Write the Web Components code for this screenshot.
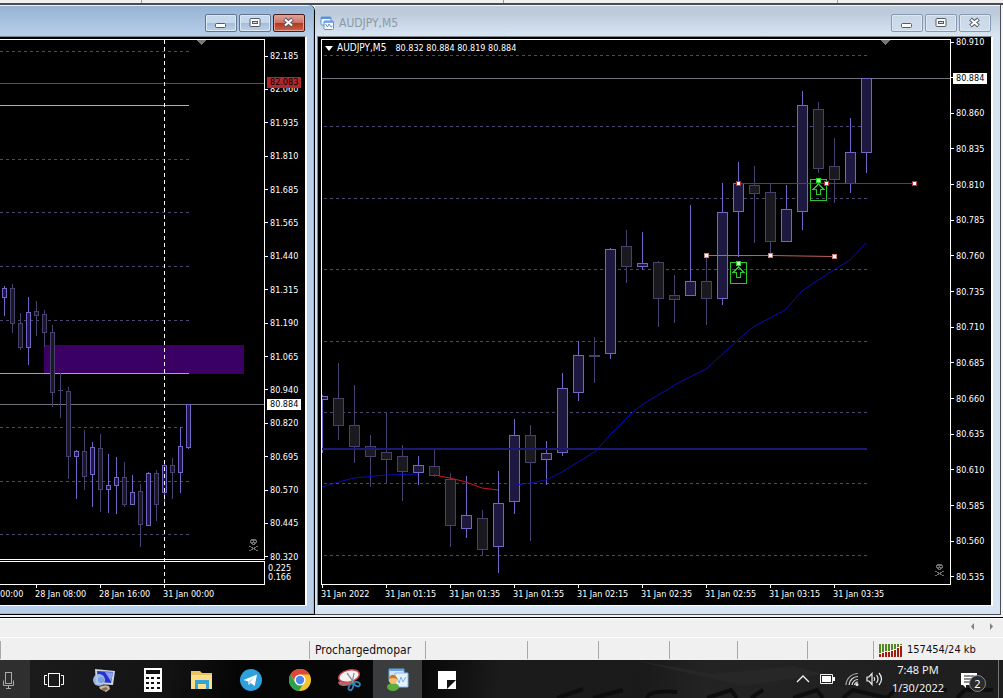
<!DOCTYPE html>
<html lang="en">
<head>
<meta charset="utf-8">
<title>AUDJPY,M5</title>
<style>
html, body { margin: 0; height: 100%; }
body { overflow: hidden; background: #f0f0f0; font-family: "DejaVu Sans Condensed", "DejaVu Sans", sans-serif; }
</style>
</head>
<body>
<trade-desktop></trade-desktop>
<script>
function define(name, html, setup) {
  const template = document.createElement('template');
  template.innerHTML = html;
  customElements.define(name, class extends HTMLElement {
    connectedCallback() {
      if (this.shadowRoot) return;
      const root = this.attachShadow({ mode: 'open' });
      root.append(template.content.cloneNode(true));
      if (setup) setup(this, root);
    }
  });
}

/* Candles: [x, rising, high, bodyTop, bodyBottom, low] */
const SERIES = {
  h1: {
    box: [0, 39, 265, 546], half: 2, gridFrom: 0, gridTo: 189, grid: [51, 159, 212, 266, 320, 427, 481, 534],
    candles: [
      [4,1,286,288,297,315],[12,0,284,288,323,332],[20,0,313,323,347,349],[28,1,297,312,347,364],
      [36,0,301,311,315,335],[44,0,310,314,332,346],[52,0,325,332,392,406],[60,0,373,390,390,417],
      [68,0,387,391,456,478],[76,1,450,451,456,498],[84,0,430,451,476,489],[92,1,442,447,474,506],
      [100,0,434,448,489,511],[108,1,454,485,489,512],[116,1,457,477,485,513],[124,0,462,477,504,506],
      [132,1,475,492,504,504],[140,0,484,491,524,546],[148,1,472,473,525,525],[156,0,470,473,504,520],
      [164,1,460,465,492,503],[172,0,458,465,472,498],[180,1,427,446,472,492],[188,1,404,404,447,448]
    ]
  },
  m5: {
    box: [321, 39, 630, 546], half: 5, gridFrom: 324, gridTo: 868, grid: [55, 126, 198, 269, 341, 412, 483, 555],
    candles: [
      [322,1,395,396,399,452],[338,0,363,398,425,439],[354,0,385,425,446,462],[370,0,435,446,456,486],
      [386,0,412,452,459,483],[402,0,445,456,471,500],[418,1,456,465,472,484],[434,0,449,466,475,476],
      [450,0,473,479,525,546],[466,1,476,515,528,537],[482,0,510,518,549,555],[498,1,471,503,546,572],
      [514,1,419,435,501,513],[530,0,425,435,462,540],[546,1,441,453,459,484],[562,1,373,388,452,455],
      [578,1,341,355,392,400],[594,0,337,355,356,382],[610,1,248,249,353,358],[626,0,230,246,266,282],
      [642,1,232,263,266,269],[658,0,261,262,298,326],[674,0,275,295,299,322],[690,1,205,281,295,295],
      [706,0,257,281,298,324],[722,1,183,212,298,304],[738,1,162,183,211,256],[754,0,166,185,193,242],
      [770,0,184,192,241,257],[786,1,185,209,241,241],[802,1,91,105,211,229],[818,0,102,109,168,172],
      [834,0,138,166,179,202],[850,1,118,152,183,192],[866,1,78,78,152,172]
    ]
  }
};

const SKULL = ['..XXXXX..', '.XXXXXXX.', '.X..X..X.', '.XXXXXXX.', '..XX.XX..', '...XXX...', '.........',
  'XX.....XX', '..XX.XX..', '...XXX...', '..XX.XX..', 'XX.....XX'];

const rect = (x, y, w, h, fill) => `<rect x="${x}" y="${y}" width="${w}" height="${h}" fill="${fill}"/>`;
const level = (x, y, to, color) => `<path d="M${x} ${y + .5}H${to}" stroke="${color}" shape-rendering="auto"/>`;
const dashes = (s) => s.grid.map(y =>
  `<path d="M${s.gridFrom} ${y + .5}H${s.gridTo}" stroke="#4a4770" stroke-dasharray="3 3"/>`).join('');
const candles = (s) => s.candles.map(([x, up, hi, top, bot, lo]) => {
  const line = up ? '#7466c8' : '#48406f', fill = up ? '#1d1940' : '#19191f', w = s.half * 2 + 1;
  let out = rect(x, hi, 1, lo - hi + 1, line);
  out += rect(x - s.half, top, w, bot - top + 1, line);
  if (bot - top > 1) out += rect(x - s.half + 1, top + 1, w - 2, bot - top - 1, fill);
  return out;
}).join('');
const skull = (x, y) => SKULL.map((row, j) => [...row].map((c, i) => c === 'X' ? rect(x + i, y + j, 1, 1, '#6c6c6c') : '').join('')).join('');
const handle = (x, y, c) => rect(x - 2, y - 2, 5, 5, c) + rect(x - 1, y - 1, 3, 3, '#fff');
const signal = (x, y) => `<rect x="${x - 7.5}" y="${y + .5}" width="16" height="21" fill="none" stroke="#28c828"/>
  <path d="M${x + .5} ${y + 5}l-5 5h3v5.500h4v-5.500h3z" fill="none" stroke="#28c828"/>` + rect(x - 2, y - 1, 5, 5, '#20e020') + rect(x - 1, y, 3, 3, '#b8ffb8');

const PAINT = {
  h1: s => dashes(s)
    + level(0, 404, 264, '#707078')
    + rect(44, 345, 200, 29, '#3a0064')
    + level(0, 83, 264, '#b8242c') + level(0, 105, 189, '#dca850') + level(0, 373, 189, '#dc9858')
    + candles(s)
    + `<path d="M164.5 40V584" stroke="#fff" stroke-dasharray="4 3"/>`
    + `<path d="M196 40h10l-5 5z" fill="#777"/>`
    + rect(0, 39, 265, 1, '#fff') + rect(264, 39, 1, 521, '#fff') + rect(0, 559, 265, 1, '#fff')
    + rect(0, 561, 265, 1, '#fff') + rect(264, 561, 1, 24, '#fff') + rect(0, 584, 265, 1, '#fff')
    + skull(249, 539),
  m5: s => dashes(s)
    + level(322, 78, 950, '#707078')
    + candles(s)
    + rect(322, 448, 545, 2, '#1b1b72')
    + `<g fill="none" shape-rendering="auto"><path stroke="#0c0cb4" d="M322 487L335 483L354 478L386 475L418 474M510 486L530 483L546 480L562 472L596 451L610 435L633 412L643 404L660 394L680 382L706 369L737 341L753 327L785 310L802 291L832 271L850 260L866 243"/>
       <path stroke="#d01820" d="M434 475L450 478L466 482L482 488L498 490"/>
       <path stroke="#c0605c" d="M706 255.500H770L834 256.500"/></g>`
    + level(738, 183, 914, '#b01c26')
    + signal(738, 262) + signal(818, 179)
    + handle(706, 255, '#d08078') + handle(770, 255, '#d08078') + handle(834, 256, '#d08078')
    + handle(738, 183, '#c03038') + handle(826, 183, '#c03038') + handle(914, 183, '#c03038')
    + `<path d="M880 40h10l-5 5z" fill="#777"/>`
    + rect(321, 39, 630, 1, '#fff') + rect(321, 39, 1, 546, '#fff') + rect(950, 39, 1, 546, '#fff') + rect(321, 584, 630, 1, '#fff')
    + skull(935, 564)
};

define('candle-plot', `
<style>
:host { display: block; min-width: 0; min-height: 0; }
svg { display: block; width: 100%; height: 100%; }
</style>`, (host, root) => {
  const s = SERIES[host.getAttribute('series')];
  root.innerHTML += `<svg viewBox="${s.box.join(' ')}" preserveAspectRatio="none" shape-rendering="crispEdges" aria-hidden="true">${PAINT[host.getAttribute('series')](s)}</svg>`;
});

define('price-scale', `
<style>
:host { display: flex; flex-direction: column; justify-content: space-between; color: #fff; font-size: 9px; line-height: 10px; }
span { display: flex; align-items: center; gap: 2px; height: 10px; }
span::before { content: ""; width: 3px; height: 1px; background: #fff; }
</style>`, (host, root) => {
  for (const value of host.getAttribute('values').split(' ')) {
    const label = document.createElement('span');
    label.textContent = value === '-' ? '' : value;
    root.append(label);
  }
});

define('time-scale', `
<style>
:host { display: flex; color: #fff; font-size: 9px; line-height: 10px; overflow: hidden; }
span { flex: 0 0 64px; white-space: nowrap; box-sizing: border-box; }
span::before { content: ""; display: block; width: 1px; height: 3px; margin: 0 0 1px 1px; background: #fff; }
span[data-cut] { flex-basis: 35px; }
span[data-cut]::before { background: none; }
</style>`, (host, root) => {
  for (const value of host.getAttribute('values').split('|')) {
    const label = document.createElement('span');
    label.textContent = value;
    if (!value.includes(' ')) label.dataset.cut = '';
    root.append(label);
  }
});

define('price-tag', `
<style>
:host { position: absolute; left: 2px; width: 34px; height: 11px; box-sizing: border-box; padding-left: 3px; font-size: 9px; line-height: 11px; color: #000; background: #fff; }
:host([tone="sell"]) { background: #b0282e; }
</style><slot></slot>`);

define('chart-panel', `
<style>
:host { flex: 1; min-height: 0; display: grid; grid-template: minmax(0, 1fr) 20px / minmax(0, 1fr) 40px; background: #000; }
.plot { position: relative; padding-top: 2px; min-height: 0; display: grid; }
.scale { position: relative; display: flex; flex-direction: column; min-height: 0; }
time-scale, ::slotted(time-scale) { grid-column: 1 / 3; }
</style>
<div class="plot"><slot name="plot"></slot></div>
<div class="scale"><slot name="scale"></slot></div>
<slot name="time"></slot>`);

define('chart-caption', `
<style>
:host { position: absolute; left: 4px; top: 3px; display: flex; align-items: center; color: #fff; font-size: 9px; line-height: 12px; white-space: nowrap; }
svg { width: 8px; height: 5px; margin-right: 4px; }
b { font-weight: normal; font-size: 10px; margin-right: 9px; }
</style>
<svg viewBox="0 0 8 5"><path d="M0 0h8L4 5z" fill="#fff"/></svg><b>AUDJPY,M5</b><span>80.832 80.884 80.819 80.884</span>`);

define('mdi-window', `
<style>
:host { display: flex; flex-direction: column; min-width: 0; box-sizing: border-box; position: relative;
  background: #d7e4f2; border: solid #4a4e55; border-width: 0 1px 1px 0; padding: 0 7px 8px 2px; }
:host([active]) { background: #b9cee8; border-color: #000; padding: 0 7px 8px 0; border-top-right-radius: 6px;
  box-shadow: inset -1px -1px #5fd0ec; }
header { height: 31px; display: flex; align-items: center; box-sizing: border-box; margin: 0 -7px 0 -2px; padding: 4px 9px 0 5px; gap: 2px;
  background: linear-gradient(#f4f8fc 0 1px, #bccadb 1px, #bccadb 8px, #d6e3f1 29px); }
:host([active]) header { margin: 0 -7px 0 0; padding-right: 9px; border-top-right-radius: 6px;
  background: linear-gradient(#e6f2fc 0 1px, #96b3d4 1px, #b5cde8 29px); box-shadow: inset -1px 0 #5fd0ec; }
.icon { width: 14px; height: 14px; margin-right: 3px; }
h1 { margin: 0; font-size: 12px; font-weight: normal; line-height: 16px; color: #8e98a4; }
:host([active]) .icon, :host([active]) h1 { display: none; }
.space { flex: 1; }
button { width: 32px; height: 18px; box-sizing: border-box; padding: 0; border: 1px solid #8798b0; border-radius: 2px; display: grid; place-items: center;
  background: linear-gradient(#c9d6e5, #d0deec); box-shadow: inset 0 0 0 1px #dce8f4; }
:host([active]) button { border-color: #5f7590; background: linear-gradient(#c6d8ec 50%, #a4bdd8 50%, #bdd2ea); }
:host([active]) .close { border-color: #4a1a18; background: linear-gradient(#e0a498 0, #cf7466 48%, #b3351f 50%, #cc6648); box-shadow: inset 0 0 0 1px #e0a098; }
button svg { width: 16px; height: 12px; display: block; }
.body { flex: 1; display: flex; min-width: 0; min-height: 0; border: solid #fff; border-width: 1px 2px 1px 1px; border-top-color: #808790; border-left-color: #808080; }
:host([active]) .body { border-left: 0; }
</style>
<header>
  <svg class="icon" viewBox="0 0 14 14"><rect x="1" y="1" width="10" height="8" rx="1" fill="#f4f8ff" stroke="#5b92dc"/><path d="M1 2h10" stroke="#5b92dc" stroke-width="2"/><rect x="4" y="5" width="9.500" height="8.500" rx="1" fill="#fff" stroke="#5b92dc"/><path d="M4 6h9" stroke="#5b92dc" stroke-width="1.500"/><path d="M5.500 8l2 3 1.500-3 2 3 1.500-1" fill="none" stroke="#5b92dc"/></svg>
  <h1><slot name="title"></slot></h1><span class="space"></span>
  <button aria-label="Minimize"><svg viewBox="0 0 16 12"><rect x="2.500" y="6.500" width="10" height="4" rx="1" fill="#fff" stroke="#555b66"/></svg></button>
  <button aria-label="Restore"><svg viewBox="0 0 16 12"><rect x="3" y="1.500" width="10" height="8" rx="1" fill="#fff" stroke="#555b66"/><rect x="5.500" y="4.500" width="5" height="2" fill="#d0dcea" stroke="#555b66"/></svg></button>
  <button class="close" aria-label="Close"><svg viewBox="0 0 16 12"><path d="M3.500 2l8 7M11.500 2l-8 7" stroke="#555b66" stroke-width="4"/><path d="M4 2.500l7 6M11 2.500l-7 6" stroke="#fff" stroke-width="2"/></svg></button>
</header>
<div class="body"><slot></slot></div>`);

define('tab-strip', `
<style>
:host { display: flex; justify-content: flex-end; align-items: flex-start; gap: 13px; height: 20px; box-sizing: border-box; border-top: 1px solid #000; padding: 5px 8px 0 0; background: #f0f0f0; box-shadow: inset 0 1px #fff; }
button { border: 0; padding: 0; width: 6px; height: 7px; background: none; display: block; }
svg { display: block; width: 6px; height: 7px; }
</style>
<button aria-label="Scroll tabs left"><svg viewBox="0 0 6 7"><path d="M4 0v7L1 3.500z" fill="#808080"/></svg></button>
<button aria-label="Scroll tabs right"><svg viewBox="0 0 6 7"><path d="M1 0v7l3-3.500z" fill="#808080"/></svg></button>`);

define('status-bar', `
<style>
:host { display: grid; grid-template-columns: 309fr 116fr 102fr 71fr 71fr 68fr 70fr 66fr 130fr; height: 23px; box-sizing: border-box; border-top: 1px solid #fff; padding: 3px 0 1px; background: #f0f0f0; color: #111; font-size: 12px; line-height: 18px; }
span { border-left: 1px solid #a8a8a8; padding-left: 5px; white-space: nowrap; display: flex; align-items: center; }
span:first-child { border: 0; }
.net { gap: 4px; font-size: 11px; }
svg { width: 24px; height: 13px; }
</style>
<span></span><span>Prochargedmopar</span><span></span><span></span><span></span><span></span><span></span><span></span>
<span class="net"><svg viewBox="0 0 24 13" shape-rendering="crispEdges"></svg>157454/24 kb</span>`, (host, root) => {
  const green = [9, 8, 7, 7, 6, 5, 3, 1];
  root.querySelector('svg').innerHTML = green.map((g, i) => rect(i * 3, 0, 2, g, '#4f8a22') + rect(i * 3, g + 1, 2, 12 - g, '#a01c10')).join('');
});

define('task-button', `
<style>
:host { display: block; flex: 0 0 49px; }
:host([mic]) { flex-basis: 30px; }
button { display: flex; align-items: center; justify-content: center; width: 100%; height: 100%; padding: 2px 0 0; border: 0; background: none; }
:host([mic]) button { background: #2f2f2f; justify-content: flex-start; }
:host([running]) button { background: #3b3c3d; }
::slotted(svg) { width: 24px; height: 24px; display: block; }
:host([mic]) ::slotted(svg) { margin-left: -4px; }
</style><button><slot></slot></button>`, (host, root) => {
  root.querySelector('button').setAttribute('aria-label', host.getAttribute('label'));
});

define('system-tray', `
<style>
:host { display: flex; align-items: center; color: #f2f2f2; font: 11px/18px "Noto Sans", sans-serif; }
button { border: 0; padding: 0; background: none; display: block; }
svg { display: block; }
.bat { margin-left: 10px; } .wifi { margin-left: 10px; } .vol { margin-left: 7px; }
time { width: 54px; margin-left: 8px; text-align: center; }
time span { display: block; white-space: nowrap; }
.notes { margin-left: 16px; position: relative; width: 30px; height: 30px; }
.notes svg { margin-top: 2px; }
.notes b { position: absolute; left: 8px; top: 11px; width: 15px; height: 15px; border: 1px solid #8a8a8a; border-radius: 50%; background: #2b2b2b; color: #fff; font: 11px/15px "Noto Sans", sans-serif; }
.peek { width: 5px; height: 38px; margin-left: 7px; border-left: 1px solid #777; box-sizing: border-box; }
</style>
<button aria-label="Hidden icons"><svg width="14" height="10" viewBox="0 0 14 10"><path d="M1 8l6-6 6 6" fill="none" stroke="#f2f2f2" stroke-width="1.300"/></svg></button>
<button class="bat" aria-label="Battery"><svg width="15" height="10" viewBox="0 0 15 10"><path d="M.5 .5h12v9H.5z" fill="none" stroke="#f2f2f2"/><path d="M2 2h9v6H2zM13 3h2v4h-2z" fill="#fff"/></svg></button>
<button class="wifi" aria-label="Network"><svg width="14" height="14" viewBox="0 0 14 14" fill="none" stroke="#ddd" stroke-width="1.200"><path d="M1 13A12 12 0 0 1 13 1.500" opacity=".7"/><path d="M4 13A9 9 0 0 1 13 4.500"/><path d="M7 13A6 6 0 0 1 13 7.500"/><path d="M9.500 13A3.500 3.500 0 0 1 13 10"/><circle cx="12" cy="12.500" r="1" fill="#fff"/></svg></button>
<button class="vol" aria-label="Volume"><svg width="17" height="14" viewBox="0 0 17 14" fill="none" stroke="#eee" stroke-width="1.200"><path d="M1 5h2l3-3.500v11L3 9H1z"/><path d="M8 5q1.500 2 0 4"/><path d="M10.500 3q3 4 0 8"/><path d="M13 1q5 6 0 12"/></svg></button>
<time><span>7:48 PM</span><span>1/30/2022</span></time>
<button class="notes" aria-label="Notifications"><svg width="17" height="17" viewBox="0 0 17 17"><path d="M0 1h16v12H5v3l-3-3H0z" fill="#fff"/><path d="M3 4h10M3 7h10M3 10h6" stroke="#222"/></svg><b>2</b></button>
<div class="peek"></div>`);

define('task-bar', `
<style>
:host { display: flex; position: relative; height: 38px; overflow: hidden; background: linear-gradient(100deg, #1c1c1c 0, #141414 16%, #050505 24%, #080808 42%, #1b1b1b 50%, #1a1a1a 64%, #232323 70%, #1e1e1e 100%); }
.wall { position: absolute; right: 0; bottom: 0; width: 480px; height: 38px; }
task-button, system-tray { position: relative; }
.space { flex: 1; }
</style>
<svg class="wall" viewBox="0 0 480 38" aria-hidden="true"><path d="M110 0l80 14 80-8 30 8-80 12z" fill="#272727"/><g fill="none" stroke="#0e0e0e" stroke-width="4"><path d="M34 38l26-9M70 38l30-8M124 38q2-8 30-6M184 38l24-8 6 8M228 38l12-8M270 38l24-8 6 8M320 38l10-8 34 8 8-8M384 30h40M434 38l8-8h28"/></g></svg>
<task-button mic label="Voice search"><svg viewBox="0 0 24 24" fill="none" stroke="#aaa"><rect x="9.500" y="4.500" width="6" height="11"/><path d="M7.500 12.500v5h10v-5M12.500 18v3M10 20.500h5"/></svg></task-button>
<task-button label="Task View"><svg viewBox="0 0 24 24" fill="none" stroke="#fff"><rect x="5.500" y="5.500" width="11" height="13"/><path d="M4 7.500H1.500v9H4M18 7.500h2.500v9H18"/></svg></task-button>
<task-button label="Remote computer"><svg viewBox="0 0 24 24"><path d="M3 1l20 2-2 14-17-1z" fill="#cfd6dc"/><path d="M5 3l16 1-2 11-13-1z" fill="#2434c8"/><path d="M13 4l8 .5-2 9z" fill="#8ea0f0"/><circle cx="7" cy="12" r="6" fill="#a9c6ee" opacity=".9"/><circle cx="9" cy="12" r="3" fill="#7d9fe0"/><path d="M7 19q5-3 10-1l1 3-4 3-6-3z" fill="#c9b59a"/><path d="M9 21l5-2 2 2-4 2z" fill="#8a6a50"/></svg></task-button>
<task-button label="Calculator"><svg viewBox="0 0 24 24"><path d="M3 0h18v24H3z" fill="#fff"/><path d="M5 2h14v4H5z" fill="#111"/><path d="M5 9h3v2H5zM10 9h3v2h-3zM16 9h3v2h-3zM5 14h3v2H5zM10 14h3v2h-3zM16 14h3v2h-3zM5 19h3v2H5zM10 19h3v2h-3zM16 19h3v2h-3z" fill="#111"/></svg></task-button>
<task-button label="File Explorer"><svg viewBox="0 0 24 24"><path d="M1 3h9l2 2h10v16H1z" fill="#e8c360"/><path d="M1 7h21v14H1z" fill="#fbdf88"/><path d="M5 12h14v9h-3v-5H8v5H5z" fill="#36a3d4"/></svg></task-button>
<task-button label="Telegram"><svg viewBox="0 0 24 24"><circle cx="12" cy="12" r="11" fill="#2ea0dc"/><path d="M4.500 12L18 6.500l-2.300 11.500-4-3-2 2-.5-3.500z" fill="#fff"/><path d="M9.200 13.500L15.500 9l-4.300 5.500-1.500 2.500z" fill="#b8dcf0"/></svg></task-button>
<task-button label="Chrome"><svg viewBox="0 0 24 24"><circle cx="12" cy="12" r="11" fill="#f4c32c"/><path d="M2.500 6.500A11 11 0 0 1 21.500 6.500H12A5.500 5.500 0 0 0 6.500 12.500z" fill="#e0453a"/><path d="M2.500 6.500A11 11 0 0 0 11 23l5-8.500A5.500 5.500 0 0 1 7.200 14.500z" fill="#2ca04c"/><circle cx="12" cy="12" r="5.500" fill="#fff"/><circle cx="12" cy="12" r="4.200" fill="#4a86ec"/></svg></task-button>
<task-button label="Snipping Tool"><svg viewBox="0 0 24 24"><path d="M1 14Q2 20 13 17l3-3-12-1z" fill="#b06a68"/><ellipse cx="12" cy="8" rx="10.500" ry="5.800" transform="rotate(-14 12 8)" fill="#f6f2f4" stroke="#cc4a4e" stroke-width="1.500"/><path d="M10 5l8 11M17 5l-2 11" stroke="#8a949c" stroke-width="1.300"/><ellipse cx="14" cy="19" rx="2" ry="3.500" transform="rotate(25 14 19)" fill="none" stroke="#2d86bc" stroke-width="1.800"/><ellipse cx="20" cy="16" rx="3" ry="2" transform="rotate(25 20 16)" fill="none" stroke="#2d86bc" stroke-width="1.800"/></svg></task-button>
<task-button running label="MetaTrader"><svg viewBox="0 0 24 24"><path d="M3 1h15v12H3z" fill="#cfe6fa" stroke="#69a4de"/><path d="M3 2h15" stroke="#69a4de" stroke-width="2"/><path d="M9 5h13v14H9z" fill="#e4f0fc" stroke="#8ab8e6"/><path d="M11 10l2 5 2-6 2 5 3-5" fill="none" stroke="#7fb0e6"/><ellipse cx="7" cy="19" rx="6" ry="4" fill="#5cae3c"/><circle cx="7" cy="12" r="4" fill="#f2be78"/><path d="M3 11q1-5 5-4 3 1 3 4-4-2-8 0z" fill="#c77a1c"/></svg></task-button>
<task-button label="Sticky Notes"><svg viewBox="0 0 24 24"><path d="M3 3h18v9l-9 9H3z" fill="#fff"/><path d="M12 12h9v9h-9z" fill="#fff"/><path d="M12 21v-9h9z" fill="#111"/></svg></task-button>
<span class="space"></span>
<system-tray></system-tray>`);

define('trade-desktop', `
<style>
:host { display: flex; flex-direction: column; height: 100vh; }
.toolbar { height: 5px; box-sizing: border-box; display: grid; grid-template-columns: 141fr 362fr 334fr 166fr; background: #f0f0f0; border-bottom: 2px solid #4c4c50; }
.toolbar i { border-left: 1px solid #999; }
.toolbar i:first-child { border: 0; }
main { flex: 1; min-height: 0; display: grid; grid-template-columns: 315fr 686fr 2px; grid-template-rows: minmax(0, 1fr); padding-bottom: 2px; background: #f4f4f4; }
price-scale { flex: 1; min-height: 0; }
.hourly price-scale { padding: 14px 0 2px; }
.five price-scale { padding-bottom: 3px; }
.volumes { display: flex; flex-direction: column; padding: 0 0 3px 3px; color: #fff; font-size: 9px; line-height: 9px; }
.five { padding-left: 3px; }
.scale { display: flex; flex-direction: column; flex: 1; min-height: 0; }
.plot { position: relative; display: grid; min-height: 0; min-width: 0; }
.hourly .current { top: 362px; } .hourly .level { top: 40px; }
.five .current { top: 36px; }
</style>
<div class="toolbar"><i></i><i></i><i></i><i></i></div>
<main>
  <mdi-window active>
    <chart-panel class="hourly">
      <candle-plot slot="plot" series="h1"></candle-plot>
      <div class="scale" slot="scale">
        <price-scale values="82.185 82.060 81.935 81.810 81.685 81.565 81.440 81.315 81.190 81.065 80.940 80.820 80.695 80.570 80.445 80.320"></price-scale>
        <div class="volumes"><span>0.225</span><span>0.166</span></div>
        <price-tag class="level" tone="sell">82.083</price-tag>
        <price-tag class="current">80.884</price-tag>
      </div>
      <time-scale slot="time" values="00:00|28 Jan 08:00|28 Jan 16:00|31 Jan 00:00"></time-scale>
    </chart-panel>
  </mdi-window>
  <mdi-window>
    <span slot="title">AUDJPY,M5</span>
    <chart-panel class="five">
      <div class="plot" slot="plot"><candle-plot series="m5"></candle-plot><chart-caption></chart-caption></div>
      <div class="scale" slot="scale">
        <price-scale values="80.910 - 80.860 80.835 80.810 80.785 80.760 80.735 80.710 80.685 80.660 80.635 80.610 80.585 80.560 80.535"></price-scale>
        <price-tag class="current">80.884</price-tag>
      </div>
      <time-scale slot="time" values="31 Jan 2022|31 Jan 01:15|31 Jan 01:35|31 Jan 01:55|31 Jan 02:15|31 Jan 02:35|31 Jan 02:55|31 Jan 03:15|31 Jan 03:35"></time-scale>
    </chart-panel>
  </mdi-window>
</main>
<tab-strip></tab-strip>
<status-bar></status-bar>
<task-bar></task-bar>`);
</script>
</body>
</html>
